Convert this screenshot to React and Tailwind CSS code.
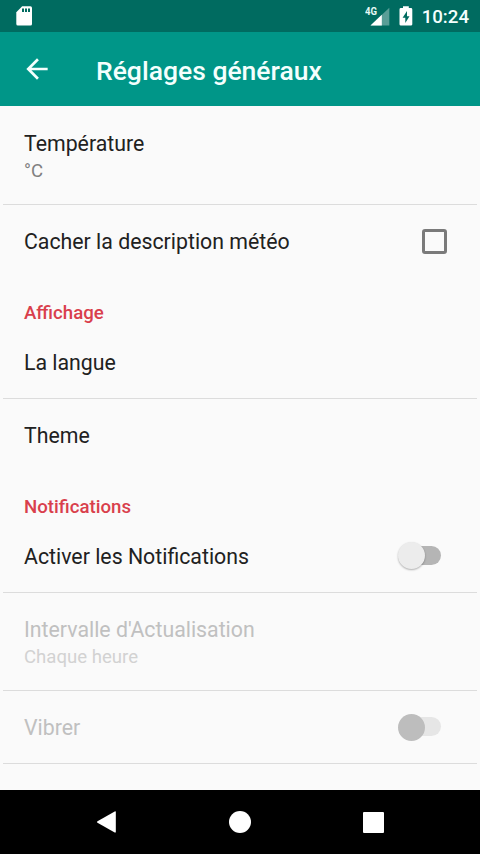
function StatusBar() {
  return (
    <div className="flex h-8 shrink-0 items-center justify-between bg-[#006b60] pl-4 pr-[11px] text-[#f4fffd]">

      {/* SD CARD */}

      <svg className="h-5 w-4" viewBox="0 0 16 20">
        <path d="M6.2 0.2H14.4Q16 0.2 16 1.8V18Q16 19.6 14.4 19.6H1.9Q0.3 19.6 0.3 18V6.2Z" fill="#fff" />
        <path d="M6 2.5h2v3.5h-2zM9 2.5h2v3.5h-2zM12 2.5h2v3.5h-2z" fill="#006b60" />
      </svg>

      <div className="flex items-center">

        {/* SIGNAL */}

        <svg className="h-5 w-[25px]" viewBox="0 0 25 20">
          <path d="M24.3 1.7V19.5H5.5Z" fill="#fff" fillOpacity="0.35" />
          <path d="M16.8 8.8V19.5H5.5Z" fill="#fff" />
          <text x="0" y="9.2" fontSize="10.5" fontWeight="700" fontFamily="Roboto, sans-serif" fill="#e6f8f5" textLength="12" lengthAdjust="spacingAndGlyphs">4G</text>
        </svg>

        {/* BATTERY */}

        <svg className="ml-[9px] h-5 w-[14px]" viewBox="0 0 14 20">
          <path d="M4 0.2H9.8V2H11.9Q13.3 2 13.3 3.4V18.2Q13.3 19.6 11.9 19.6H1.9Q0.5 19.6 0.5 18.2V3.4Q0.5 2 1.9 2H4Z" fill="#fff" />
          <path d="M8 5L3.6 11.7H6.3V17L10.5 10.2H8Z" fill="#006b60" />
        </svg>

        <span className="ml-[9px] pt-px text-[18.67px] font-medium leading-8">10:24</span>

      </div>

    </div>
  );
}

function AppBar() {
  return (
    <div className="flex h-[74px] shrink-0 items-center bg-[#009688] pl-[21px] text-[#f4fffd]">

      <svg className="h-8 w-8" viewBox="0 0 24 24" fill="currentColor">
        <path d="M20 11H7.83l5.59-5.59L12 4l-8 8 8 8 1.41-1.41L7.83 13H20v-2z" />
      </svg>

      <h1 className="ml-[43px] pt-[3px] text-[26.5px] font-medium leading-8">
        Réglages généraux
      </h1>

    </div>
  );
}

function Divider() {
  return <div className="mx-[3px] h-px shrink-0 bg-[#dcdcdc]" />;
}

function Category({ children }) {
  return (
    <h2 className="flex h-[49px] items-end pb-px pl-6 text-[18.67px] font-medium leading-6 text-[#d93f4c]">
      {children}
    </h2>
  );
}

function Checkbox() {
  return <div className="mr-[33px] size-[25px] rounded-[3px] border-[3px] border-[#7a7a7a]" />;
}

function Switch({ disabled }) {
  return (
    <div className="relative mr-[39px] h-7 w-[43px]">
      <div className={`absolute right-0 top-[4px] h-[19px] w-[36px] rounded-full ${disabled ? "bg-[#e6e6e6]" : "bg-[#b5b5b5]"}`} />
      <div className={`absolute left-0 top-0 size-[27px] rounded-full ${disabled ? "top-px bg-[#bdbdbd]" : "bg-[#ececec] shadow-[0_1px_2px_rgba(0,0,0,0.3)]"}`} />
    </div>
  );
}

function Row({ title, summary, disabled, children }) {
  return (
    <div className={`flex items-center justify-between pl-6 ${summary ? "h-[97px] pt-1" : "h-[72px]"}`}>

      <div>

        <p className={`text-[21.3px] leading-[27px] ${disabled ? "text-[#c0c0c0]" : "text-[#212121]"}`}>
          {title}
        </p>

        {summary && (
          <p className={`text-[18.6px] leading-[28px] ${disabled ? "text-[#d2d2d2]" : "text-[#808080]"}`}>
            {summary}
          </p>
        )}

      </div>

      {children}

    </div>
  );
}

function NavBar() {
  return (
    <div className="flex h-16 shrink-0 items-center bg-black px-10">

      <div className="flex flex-1 justify-center">
        <svg className="size-6" viewBox="0 0 24 24" fill="#fff">
          <path d="M20.8 1.9V21.9Q20.8 23 19.7 22.4L2.5 12.8Q1.3 12 2.5 11.2L19.7 1.4Q20.8 0.8 20.8 1.9Z" />
        </svg>
      </div>

      <div className="flex flex-1 justify-center">
        <div className="size-[22px] rounded-full bg-white" />
      </div>

      <div className="flex flex-1 justify-center">
        <div className="size-[21px] rounded-[1px] bg-white" />
      </div>

    </div>
  );
}

export default function App() {
  return (
    <div className="flex h-[854px] w-[480px] flex-col overflow-hidden bg-[#fafafa] font-[Roboto,sans-serif]">

      <StatusBar />
      <AppBar />

      <div className="flex-1 overflow-hidden pt-px">

        <Row title="Température" summary="°C" />
        <Divider />
        <Row title="Cacher la description météo">
          <Checkbox />
        </Row>

        <Category>Affichage</Category>
        <Row title="La langue" />
        <Divider />
        <Row title="Theme" />

        <Category>Notifications</Category>
        <Row title="Activer les Notifications">
          <Switch />
        </Row>
        <Divider />
        <Row title="Intervalle d'Actualisation" summary="Chaque heure" disabled />
        <Divider />
        <Row title="Vibrer" disabled>
          <Switch disabled />
        </Row>
        <Divider />

      </div>

      <NavBar />

    </div>
  );
}
